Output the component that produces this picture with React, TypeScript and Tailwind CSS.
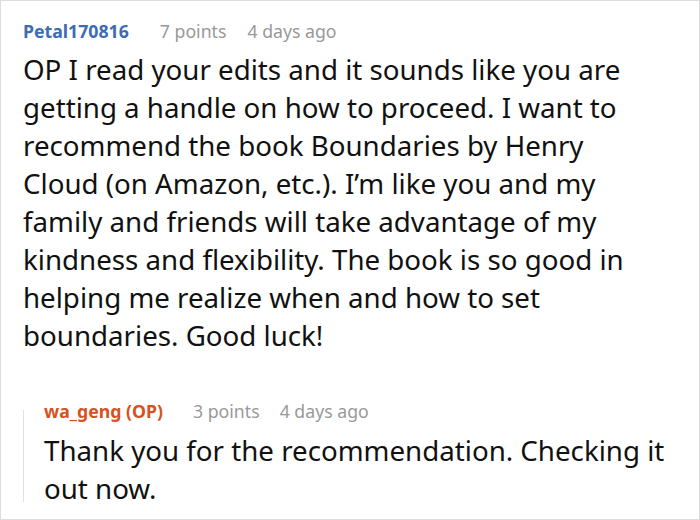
import React from "react";

const font = { fontFamily: '"Noto Sans", "Open Sans", sans-serif' };

const CommentHeader = ({
  name,
  nameColor,
  points,
  time,
  gap,
  gap2,
}: {
  name: string;
  nameColor: string;
  points: string;
  time: string;
  gap: string;
  gap2: string;
}) => (
  <div className="flex items-center h-[24px] text-[17.7px] leading-[24px] whitespace-nowrap">
    <span className={`font-bold ${nameColor}`}>{name}</span>
    <span className={`text-[#999999] ${gap}`}>{points}</span>
    <span className={`text-[#999999] ${gap2}`}>{time}</span>
  </div>
);

export default function App() {
  return (
    <div
      className="w-[700px] h-[520px] bg-white border border-[#dddddd] overflow-hidden pl-[22px] pr-[4px] pt-[18px]"
      style={font}
    >
      <CommentHeader
        name="Petal170816"
        nameColor="text-[#3d6cb4]"
        points="7 points"
        time="4 days ago"
        gap="ml-[31px]"
        gap2="ml-[21px]"
      />
      <p className="mt-[7px] text-[27.7px] leading-[38px] text-[#111111] whitespace-nowrap">
        OP I read your edits and it sounds like you are
        <br />
        getting a handle on how to proceed. I want to
        <br />
        recommend the book Boundaries by Henry
        <br />
        Cloud (on Amazon, etc.). I’m like you and my
        <br />
        family and friends will take advantage of my
        <br />
        kindness and flexibility. The book is so good in
        <br />
        helping me realize when and how to set
        <br />
        boundaries. Good luck!
      </p>
      <div className="flex mt-[45px]">
        <div className="w-[1px] bg-[#e0e0e0] mt-[11px] mb-[5px] shrink-0" />
        <div className="pl-[20px]">
          <CommentHeader
            name="wa_geng (OP)"
            nameColor="text-[#d6531f]"
            points="3 points"
            time="4 days ago"
            gap="ml-[30px]"
            gap2="ml-[20px]"
          />
          <p className="mt-[8px] text-[27.7px] leading-[38px] text-[#111111] whitespace-nowrap">
            Thank you for the recommendation. Checking it
            <br />
            out now.
          </p>
        </div>
      </div>
    </div>
  );
}
